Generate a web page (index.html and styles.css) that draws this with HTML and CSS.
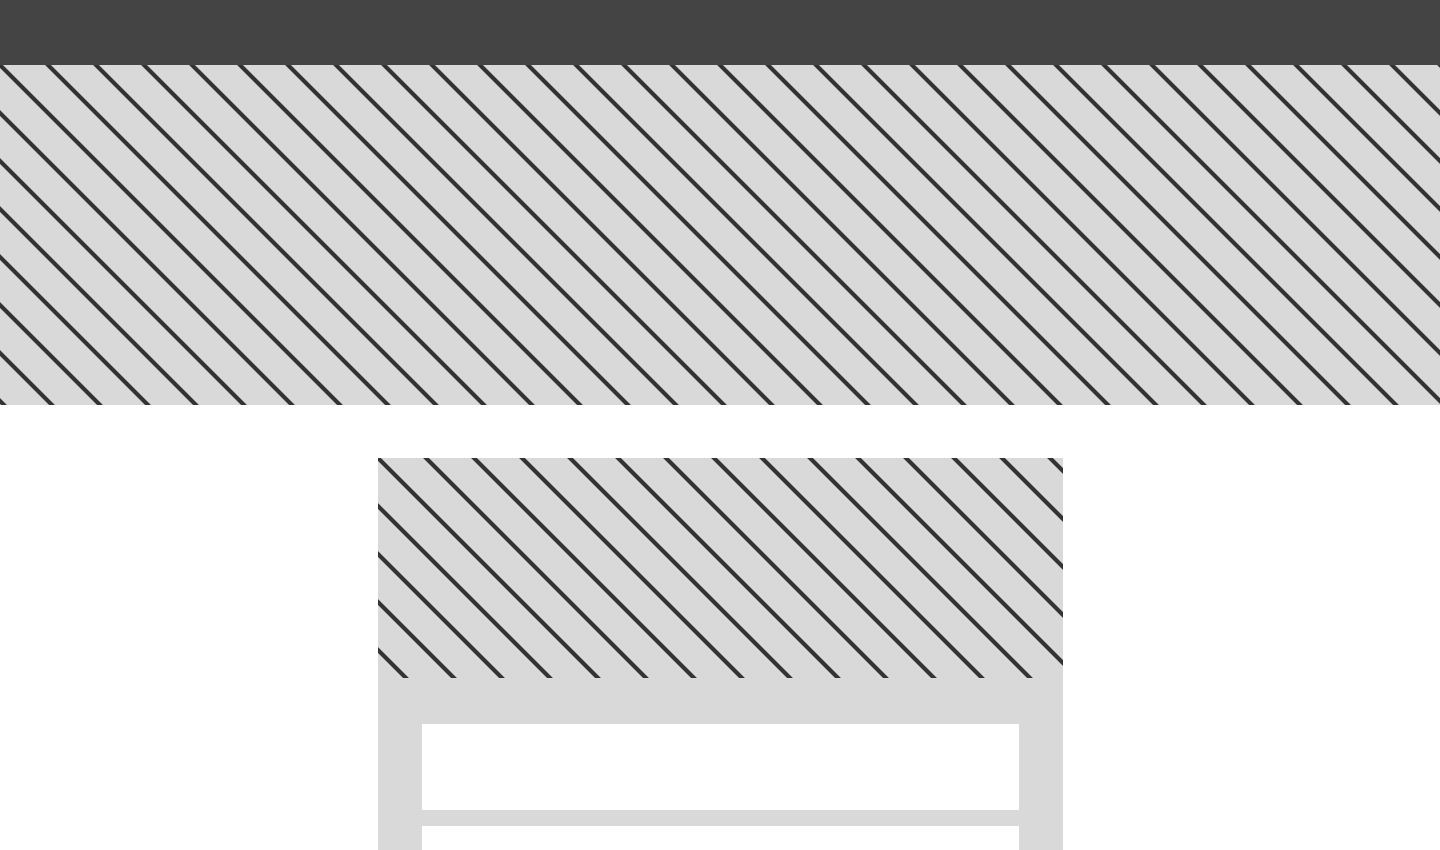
FILE: index.html
```html
<!DOCTYPE html>
<html lang="en">
<head>
    <meta charset="UTF-8">
    <meta name="viewport" content="width=device-width, initial-scale=1.0">
    <title>Placeholder</title>
    <link rel="stylesheet" href="styles.css">
</head>
<body>
<header class="topbar"></header>
<section class="hero hatch"></section>
<main class="content">
    <div class="card">
        <div class="card-media hatch"></div>
        <div class="card-body">
            <div class="card-row"></div>
            <div class="card-row"></div>
            <div class="card-row"></div>
        </div>
    </div>
</main>
</body>
</html>
```

FILE: styles.css
```css
*, *:before, *:after {
    box-sizing: border-box;
}

body {
    margin: 0;
    padding: 0;
    font-family: 'Liberation Sans', Arial, sans-serif;
    background-color: #ffffff;
}

.topbar {
    height: 65px;
    background-color: #444444;
}

/* diagonal placeholder stripes, 48px apart horizontally */
.hatch {
    background-color: #d9d9d9;
    background-image: linear-gradient(45deg,
        #333333 0, #333333 2.2%, rgba(51, 51, 51, 0) 3.8%,
        rgba(51, 51, 51, 0) 46.2%, #333333 47.8%, #333333 52.2%, rgba(51, 51, 51, 0) 53.8%,
        rgba(51, 51, 51, 0) 96.2%, #333333 97.8%, #333333 100%);
    background-size: 48px 48px;
    background-position: 0 0;
}

.hero {
    height: 340px;
}

.content {
    padding-top: 53px;
}

.card {
    width: 685px;
    margin: 0 auto;
    background-color: #d9d9d9;
}

.card-media {
    height: 220px;
}

.card-body {
    display: flex;
    flex-direction: column;
    gap: 16px;
    padding: 46px 44px 44px;
}

.card-row {
    height: 86px;
    background-color: #ffffff;
}
```
